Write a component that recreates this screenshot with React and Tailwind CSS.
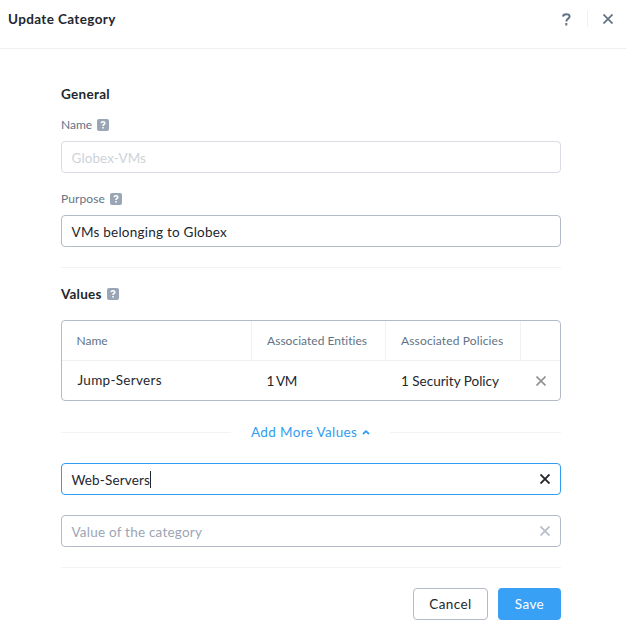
import React from "react";

function Cross({ size = 10, width = 1.6, className = "" }) {
  return (
    <svg width={size} height={size} viewBox="0 0 10 10" fill="none" stroke="currentColor" strokeWidth={width} className={`block shrink-0 ${className}`}>
      <path d="M0.5 0.5L9.5 9.5M9.5 0.5L0.5 9.5" />
    </svg>
  );
}

function Help() {
  return (
    <span className="flex h-3 w-3 shrink-0 items-center justify-center rounded-[2px] bg-[#9aa5b5]">
      <svg width="12" height="12" viewBox="0 0 12 12" fill="none" stroke="white" strokeWidth="1.6">
        <path d="M4.1 4.2C4.3 3.1 5.1 2.8 6 2.8C7 2.8 7.8 3.3 7.8 4.2C7.8 5.4 6 5.3 6 7M6 8V9.5" />
      </svg>
    </span>
  );
}

function Label({ children }) {
  return (
    <div className="flex h-4 items-center gap-[5px] text-[12px] leading-4 text-[#627386]">
      {children}
      <Help />
    </div>
  );
}

function Field({ children, className, onClear }) {
  return (
    <div className={`flex h-8 items-center justify-between rounded-[4px] border pt-[2px] pr-[10px] pl-[9.5px] text-[13.5px] leading-4 ${className}`}>
      {children}
      {onClear}
    </div>
  );
}

export default function App() {
  return (
    <div className="h-[642px] w-[627px] bg-white font-[Lato,sans-serif] text-[#22272e]">
      <header className="flex h-[49px] items-start justify-between border-b border-[#f0f1f3] pt-[11px] pr-[14px] pl-2">
        <h1 className="text-[13.5px] leading-4 font-bold tracking-[0.37px]">Update Category</h1>
        <div className="flex h-4 items-center text-[#627386]">
          <svg width="9" height="13" viewBox="0 0 9 13" fill="none" stroke="currentColor" strokeWidth="2">
            <path d="M1 3.6C1.2 1.8 2.4 1.2 4.3 1.2C6.3 1.2 7.6 2 7.6 3.6C7.6 5.8 4.3 5.4 4.3 8.4M4.3 10V12.4" />
          </svg>
          <span className="mr-[15px] ml-4 h-4 w-px bg-[#eef0f2]" />
          <Cross width={1.8} />
        </div>
      </header>

      <main className="ml-[61px] w-[500px] pt-[37px]">
        <h2 className="h-4 text-[13.5px] leading-4 font-bold tracking-[0.3px]">General</h2>
        <div className="pt-[15px]">
          <Label><span className="-mr-[0.3px]">Name</span></Label>
          <Field className="mt-2 border-[#d9dce2] text-[#ced3da]"><span className="tracking-[0.08px]">Globex-VMs</span></Field>
        </div>
        <div className="pt-[18px]">
          <Label><span className="tracking-[0.1px]">Purpose</span></Label>
          <Field className="mt-2 border-[#b5bac8]"><span className="tracking-[0.24px]">VMs belonging to Globex</span></Field>
        </div>

        <section className="mt-5 border-t border-[#f2f3f5] pt-[18px]">
          <h2 className="flex h-4 items-center gap-[5px] text-[13.5px] leading-4 font-bold">
            <span className="tracking-[0.2px]">Values</span>
            <Help />
          </h2>
          <div className="mt-[18px] h-[81px] rounded-[4px] border border-[#b5bac8]">
            <div className="grid h-10 grid-cols-[190px_134px_135px_1fr] border-b border-[#f0f1f3] text-[12px] text-[#627386]">
              <div className="flex items-center border-r border-[#f0f1f3] pl-[14.5px]">Name</div>
              <div className="flex items-center border-r border-[#f0f1f3] pl-[15px] tracking-[0.03px]">Associated Entities</div>
              <div className="flex items-center border-r border-[#f0f1f3] pl-[15px] tracking-[0.14px]">Associated Policies</div>
              <div />
            </div>
            <div className="grid h-[39px] grid-cols-[190px_134px_135px_1fr] items-center text-[13.5px]">
              <div className="pl-[15.5px] tracking-[0.3px]">Jump-Servers</div>
              <div className="pt-px pl-[14.5px] tracking-[-0.6px]">1 VM</div>
              <div className="pt-px pl-[15px]">1 Security Policy</div>
              <Cross width={1.6} className="ml-[15px] text-[#8f9194]" />
            </div>
          </div>
        </section>

        <div className="mt-[23px] flex h-4 items-center text-[13.5px] leading-4 text-[#319df2]">
          <span className="mr-5 h-px w-[170px] bg-[#f2f3f5]" />
          <span className="tracking-[0.36px]">Add More Values</span>
          <svg className="ml-[5px]" width="8" height="6" viewBox="0 0 8 6" fill="none" stroke="currentColor" strokeWidth="1.8">
            <path d="M1 5L4 2.2L7 5" />
          </svg>
          <span className="ml-auto h-px w-[171px] bg-[#f2f3f5]" />
        </div>

        <Field className="mt-[23px] border-[#319df2]" onClear={<Cross width={1.9} className="-mt-[2px]" />}>
          <span className="flex items-center"><span className="tracking-[0.14px]">Web-Servers</span><span className="-mt-[2px] h-[17px] w-px bg-[#22272e]" /></span>
        </Field>
        <Field className="mt-5 border-[#b5bac8] text-[#9ba5b4]" onClear={<Cross width={1.8} className="-mt-[2px] text-[#b8bfca]" />}>
          <span className="tracking-[0.22px]">Value of the category</span>
        </Field>

        <footer className="mt-5 flex justify-end gap-[10px] border-t border-[#f2f3f5] pt-5 text-[13.5px] leading-4">
          <button className="h-8 w-[75px] rounded-[4px] border border-[#b5bac8] tracking-[0.4px]">Cancel</button>
          <button className="h-8 w-[63px] rounded-[4px] bg-[#38a1f5] tracking-[0.4px] text-white">Save</button>
        </footer>
      </main>
    </div>
  );
}
